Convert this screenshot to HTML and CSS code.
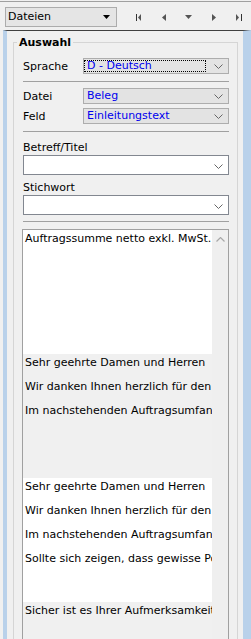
FILE: index.html
```html
<!DOCTYPE html>
<html lang="de">
<head>
    <meta charset="UTF-8">
    <meta name="viewport" content="width=device-width, initial-scale=1.0">
    <title>Textbausteine</title>
    <link rel="stylesheet" href="styles.css">
</head>
<body>
    <div class="toolbar">
        <div class="file-select">
            <span>Dateien</span>
            <svg class="drop" width="7" height="4" viewBox="0 0 7 4"><polygon points="0,0 7,0 3.5,4" fill="#000"/></svg>
        </div>
        <div class="nav">
            <span class="nav-btn"><svg width="6" height="7" viewBox="0 0 6 7"><rect x="0" y="0" width="1" height="7" fill="#333"/><polygon points="5,0 5,7 2,3.5" fill="#555"/></svg></span>
            <span class="nav-btn"><svg width="4" height="7" viewBox="0 0 4 7"><polygon points="4,0 4,7 0,3.5" fill="#555"/></svg></span>
            <span class="nav-btn"><svg width="7" height="4" viewBox="0 0 7 4"><polygon points="0,0 7,0 3.5,4" fill="#555"/></svg></span>
            <span class="nav-btn"><svg width="4" height="7" viewBox="0 0 4 7"><polygon points="0,0 0,7 4,3.5" fill="#555"/></svg></span>
            <span class="nav-btn"><svg width="6" height="7" viewBox="0 0 6 7"><polygon points="0,0 0,7 3,3.5" fill="#555"/><rect x="5" y="0" width="1" height="7" fill="#333"/></svg></span>
        </div>
    </div>

    <div class="panel">
        <fieldset class="group">
            <legend>Auswahl</legend>

            <div class="row">
                <label>Sprache</label>
                <div class="combo flat">
                    <span class="focus">D - Deutsch</span>
                    <svg class="chev" width="9" height="5" viewBox="0 0 9 5"><polyline points="0.5,0.5 4.5,4.5 8.5,0.5" fill="none" stroke="#666" stroke-width="1"/></svg>
                </div>
            </div>

            <hr class="sep">

            <div class="row">
                <label>Datei</label>
                <div class="combo flat">
                    <span class="value">Beleg</span>
                    <svg class="chev" width="9" height="5" viewBox="0 0 9 5"><polyline points="0.5,0.5 4.5,4.5 8.5,0.5" fill="none" stroke="#666" stroke-width="1"/></svg>
                </div>
            </div>
            <div class="row">
                <label>Feld</label>
                <div class="combo flat">
                    <span class="value">Einleitungstext</span>
                    <svg class="chev" width="9" height="5" viewBox="0 0 9 5"><polyline points="0.5,0.5 4.5,4.5 8.5,0.5" fill="none" stroke="#666" stroke-width="1"/></svg>
                </div>
            </div>

            <hr class="sep">

            <label class="caption">Betreff/Titel</label>
            <div class="combo edit">
                <svg class="chev" width="9" height="5" viewBox="0 0 9 5"><polyline points="0.5,0.5 4.5,4.5 8.5,0.5" fill="none" stroke="#666" stroke-width="1"/></svg>
            </div>
            <label class="caption second">Stichwort</label>
            <div class="combo edit">
                <svg class="chev" width="9" height="5" viewBox="0 0 9 5"><polyline points="0.5,0.5 4.5,4.5 8.5,0.5" fill="none" stroke="#666" stroke-width="1"/></svg>
            </div>

            <hr class="sep last">

            <div class="textlist">
                <div class="records">
                    <div class="record">
                        <p>Auftragssumme netto exkl. MwSt.</p>
                    </div>
                    <div class="record alt">
                        <p>Sehr geehrte Damen und Herren</p>
                        <p>Wir danken Ihnen herzlich für den Auftrag</p>
                        <p>Im nachstehenden Auftragsumfang</p>
                    </div>
                    <div class="record">
                        <p>Sehr geehrte Damen und Herren</p>
                        <p>Wir danken Ihnen herzlich für den Auftrag</p>
                        <p>Im nachstehenden Auftragsumfang</p>
                        <p>Sollte sich zeigen, dass gewisse Positionen</p>
                    </div>
                    <div class="record alt">
                        <p>Sicher ist es Ihrer Aufmerksamkeit</p>
                    </div>
                </div>
                <div class="vscroll">
                    <svg class="up" width="9" height="5" viewBox="0 0 9 5"><polyline points="0.5,4.5 4.5,0.5 8.5,4.5" fill="none" stroke="#a8a8a8" stroke-width="1.2"/></svg>
                </div>
            </div>
        </fieldset>
    </div>
</body>
</html>
```

FILE: styles.css
```css
body {
    margin: 0;
    width: 251px;
    height: 639px;
    overflow: hidden;
    background-color: #f0f0f0;
    font-family: "DejaVu Sans", Verdana, sans-serif;
    font-size: 11px;
    color: #000;
}
.toolbar {
    margin-top: 1px;
    border-top: 1px solid #a0a0a0;
    height: 29px;
    box-sizing: border-box;
    padding: 5px 0 0 5px;
    display: flex;
    align-items: flex-start;
}
.file-select {
    width: 120px;
    height: 20px;
    box-sizing: border-box;
    border: 1px solid #acacac;
    background-color: #e5e5e5;
    display: flex;
    align-items: center;
    justify-content: space-between;
    padding: 0 6px 0 2px;
    line-height: 18px;
}
.nav {
    display: flex;
    height: 20px;
    margin-left: 9px;
}
.nav-btn {
    width: 25px;
    display: flex;
    align-items: center;
    justify-content: center;
    flex-shrink: 0;
}
.panel {
    margin-left: 3px;
    width: 248px;
    height: 620px;
    overflow: hidden;
    box-sizing: border-box;
    border-top: 1px solid #404040;
    border-left: 4px solid #b9d1ea;
    border-right: 8px solid #b9d1ea;
    padding: 5px 5px 0 6px;
}
.group {
    margin: 0;
    min-width: 0;
    border: 1px solid #d5d5d5;
    padding: 9px 8px 0 9px;
    height: 640px;
}
.group legend {
    font-weight: bold;
    line-height: 13px;
    padding: 0 2px;
    margin-left: -6px;
}
.row {
    display: flex;
    align-items: center;
    height: 16px;
}
.row + .row {
    margin-top: 4px;
}
.row label {
    width: 60px;
    flex-shrink: 0;
}
.combo {
    box-sizing: border-box;
    display: flex;
    align-items: center;
}
.combo.flat {
    flex: 1;
    height: 16px;
    border: 1px solid #adadad;
    background-color: #e3e3e3;
    color: #0000ee;
    line-height: 14px;
}
.combo .value {
    padding-left: 3px;
}
.combo .focus {
    display: block;
    width: 122px;
    height: 12px;
    line-height: 12px;
    box-sizing: border-box;
    padding-left: 3px;
    outline: 1px dotted #000;
    outline-offset: -1px;
}
.combo .chev {
    margin-left: auto;
    margin-right: 5px;
}
.combo.edit {
    height: 20px;
    border: 1px solid #828790;
    background-color: #fff;
}
.combo.edit .chev {
    margin-top: 3px;
}
.sep {
    border: none;
    height: 1px;
    background-color: #a0a0a0;
    margin: 7px 0 6px;
}
.sep.last {
    margin: 6px 0 7px;
}
.caption {
    display: block;
    line-height: 15px;
    margin-top: 8px;
}
.caption.second {
    margin-top: 5px;
}
.textlist {
    margin-left: -1px;
    width: 207px;
    height: 460px;
    box-sizing: border-box;
    border: 1px solid #a0a0a0;
    display: flex;
}
.records {
    flex: 1;
    min-width: 0;
    overflow: hidden;
}
.record {
    height: 124px;
    overflow: hidden;
    white-space: nowrap;
    padding-left: 2px;
    background-color: #fff;
}
.record.alt {
    background-color: #f0f0f0;
}
.record p {
    margin: 0 0 6px;
    line-height: 18px;
}
.vscroll {
    width: 16px;
    flex-shrink: 0;
    background-color: #efefef;
    display: flex;
    justify-content: center;
    align-items: flex-start;
}
.vscroll .up {
    margin-top: 7px;
}
```
